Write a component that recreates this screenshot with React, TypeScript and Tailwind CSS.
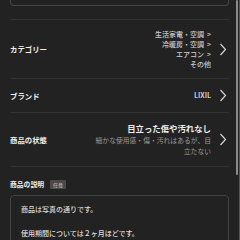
import { ReactNode } from "react";

function Chevron() {
  return (
    <svg width="8" height="13" viewBox="0 0 8 13" className="shrink-0">
      <polyline points="1.5,1 6.5,6.5 1.5,12" fill="none" stroke="#d4d4d4" strokeWidth="1.2" />
    </svg>
  );
}

function Row({ label, children, className }: { label: string; children: ReactNode; className: string }) {
  return (
    <div className={`flex items-center border-b border-[#333] ${className}`}>
      <div className="text-[7.4px] font-bold text-[#eee]">{label}</div>
      <div className="ml-auto flex flex-col items-end">{children}</div>
      <div className="ml-[8px] mr-[2px]">
        <Chevron />
      </div>
    </div>
  );
}

export default function App() {
  return (
    <div
      className="relative w-[240px] h-[240px] overflow-hidden bg-[#222]"
      style={{ fontFamily: '"Noto Sans CJK JP", "Noto Sans", sans-serif' }}
    >
      <div className="flex flex-col pl-[10px] pr-[11px]">
        <div className="h-[6px] border-x border-b border-[#444] rounded-b-[4px]" />
        <div className="mt-[13px] border-t border-[#333]" />

        <Row label="カテゴリー" className="h-[59px]">
          <div className="text-[7px] leading-[10px] font-medium text-[#ccc] text-right">
            <div>生活家電・空調<span className="ml-[3px]">&gt;</span></div>
            <div>冷暖房・空調<span className="ml-[3px]">&gt;</span></div>
            <div>エアコン<span className="ml-[3px]">&gt;</span></div>
            <div>その他</div>
          </div>
        </Row>

        <Row label="ブランド" className="h-[34px]">
          <div className="text-[7px] font-semibold text-[#ccc]">LIXIL</div>
        </Row>

        <Row label="商品の状態" className="h-[54px]">
          <div className="text-[8.4px] leading-[12px] font-bold text-[#eee]">目立った傷や汚れなし</div>
          <div className="mt-[1px] text-[6.8px] leading-[11px] text-[#999] text-right">
            <div>細かな使用感・傷・汚れはあるが、目</div>
            <div>立たない</div>
          </div>
        </Row>

        <div className="mt-[12px] flex items-center gap-[6px]">
          <span className="text-[6.8px] font-bold text-[#eee]">商品の説明</span>
          <span className="bg-[#4a4a4a] text-[#ccc] text-[5px] leading-[9px] px-[3px] rounded-[1px]">任意</span>
        </div>

        <div className="mt-[6px] h-[80px] border border-[#444] rounded-[4px] px-[10px] pt-[7px] text-[7px] leading-[12px] font-medium text-[#ddd]">
          <div>商品は写真の通りです。</div>
          <div className="h-[12px]" />
          <div>使用期間については２ヶ月ほどです。</div>
        </div>
      </div>

      <div className="absolute top-0 right-[2px] w-[2px] h-[175px] bg-[#8a8a8a] rounded-full" />
      <div className="absolute top-0 right-0 w-[1px] h-full bg-[#555]" />
    </div>
  );
}
